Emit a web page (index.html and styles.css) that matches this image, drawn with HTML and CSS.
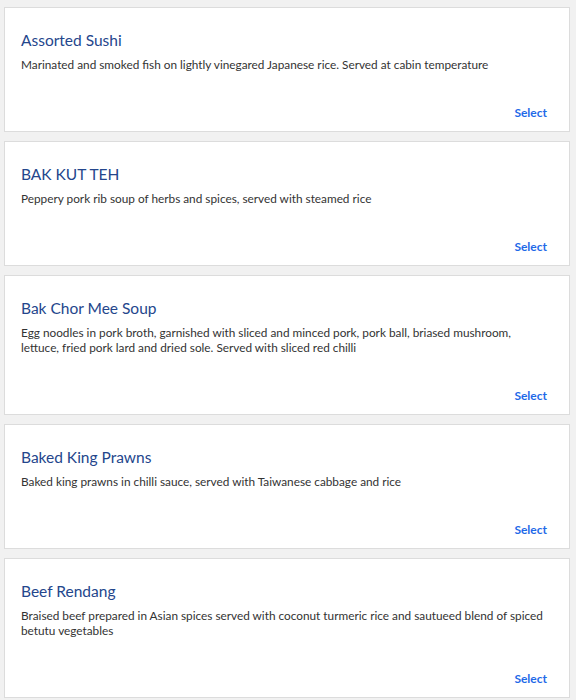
FILE: index.html
```html
<!DOCTYPE html>
<html lang="en">
<head>
<meta charset="utf-8">
<title>Meals</title>
<link rel="stylesheet" href="styles.css">
</head>
<body>
<div class="list">
  <div class="card">
    <h2 class="title">Assorted Sushi</h2>
    <p class="desc">Marinated and smoked fish on lightly vinegared Japanese rice. Served at cabin temperature</p>
    <div class="actions"><a class="select" href="#">Select</a></div>
  </div>
  <div class="card">
    <h2 class="title">BAK KUT TEH</h2>
    <p class="desc">Peppery pork rib soup of herbs and spices, served with steamed rice</p>
    <div class="actions"><a class="select" href="#">Select</a></div>
  </div>
  <div class="card">
    <h2 class="title">Bak Chor Mee Soup</h2>
    <p class="desc">Egg noodles in pork broth, garnished with sliced and minced pork, pork ball, briased mushroom,<br>lettuce, fried pork lard and dried sole. Served with sliced red chilli</p>
    <div class="actions"><a class="select" href="#">Select</a></div>
  </div>
  <div class="card">
    <h2 class="title">Baked King Prawns</h2>
    <p class="desc">Baked king prawns in chilli sauce, served with Taiwanese cabbage and rice</p>
    <div class="actions"><a class="select" href="#">Select</a></div>
  </div>
  <div class="card">
    <h2 class="title">Beef Rendang</h2>
    <p class="desc">Braised beef prepared in Asian spices served with coconut turmeric rice and sautueed blend of spiced betutu vegetables</p>
    <div class="actions"><a class="select" href="#">Select</a></div>
  </div>
</div>
</body>
</html>
```
FILE: styles.css
```css
html, body {
  margin: 0;
  padding: 0;
  background: #f1f1f1;
  font-family: Lato, "Liberation Sans", Arial, sans-serif;
}
.list {
  display: flex;
  flex-direction: column;
  gap: 9px;
  padding: 7px 6px 0 4px;
}
.card {
  background: #ffffff;
  border: 1px solid #dcdcdc;
  padding: 22px 22px 11px 16px;
}
.title {
  margin: 0;
  font-size: 15.5px;
  line-height: 20px;
  font-weight: 400;
  color: #24468c;
}
.desc {
  margin: 7px 0 0;
  font-size: 11.8px;
  line-height: 15px;
  color: #333333;
  max-width: 528px;
}
.actions {
  display: flex;
  justify-content: flex-end;
  margin-top: 33px;
  line-height: 15px;
}
.select {
  font-size: 12px;
  font-weight: 700;
  color: #1f6ae8;
  text-decoration: none;
}
```
